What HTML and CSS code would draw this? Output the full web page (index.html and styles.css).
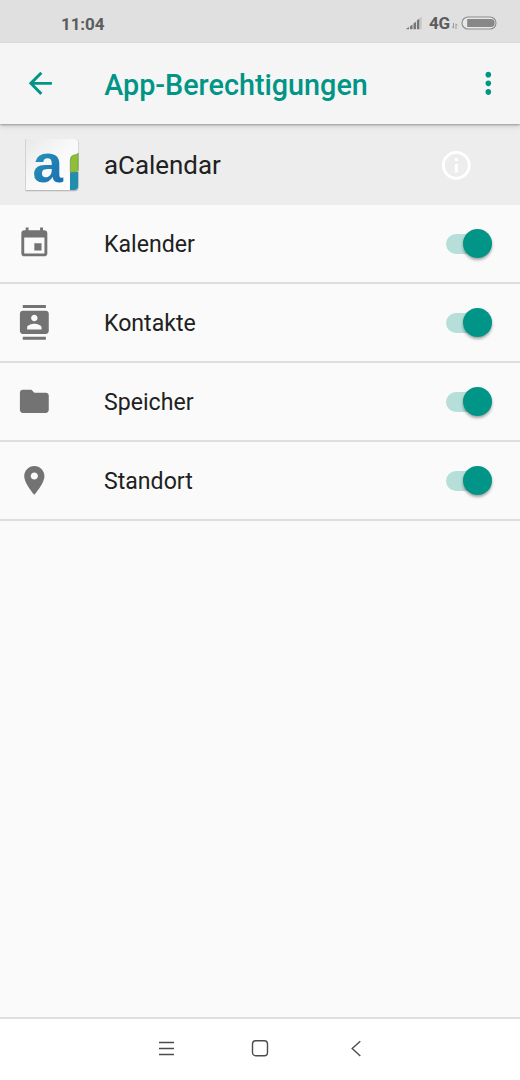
FILE: index.html
```html
<!DOCTYPE html>
<html lang="de">
<head>
<meta charset="utf-8">
<title>App-Berechtigungen</title>
<link rel="stylesheet" href="styles.css">
</head>
<body>
<div class="screen">
  <div class="status">
    <span class="time">11:04</span>
    <div class="indicators">
      <svg class="signal" width="16" height="14" viewBox="0 0 16 14">
        <path d="M.5 13.200h2.500v-2.200L.5 12.600zM4 13.200h2.500V8.500L4 10.200zM7.500 13.200h2.500V5.800L7.500 7.500zM10.900 13.200h2.500V2.500L10.900 4.500z" fill="#777"/>
        <path d="M14.200 13.200h1.500V0.500L14.200 1.700z" fill="#c4c4c4"/>
      </svg>
      <span class="network">4G</span>
      <svg class="data" width="6" height="6" viewBox="0 0 6 6"><path d="M1.500 0v5M0.300 3.600l1.200 1.700M4 6V1M4 .8l1.300 1.500" fill="none" stroke="#999" stroke-width="1"/></svg>
      <svg class="battery" width="36" height="14" viewBox="0 0 36 14">
        <rect x="1" y="1" width="34" height="12" rx="6" fill="#e8e8e8" stroke="#8c8c8c" stroke-width="1.100"/>
        <path d="M6.200 3h23.500a4 4 0 0 1 0 8H6.200z" fill="#878787"/>
      </svg>
    </div>
  </div>
  <header class="toolbar">
    <svg class="back" width="34.670" height="34.670" viewBox="0 0 24 24"><path d="M20 11H7.830l5.590-5.590L12 4l-8 8 8 8 1.410-1.410L7.830 13H20v-2z"/></svg>
    <h1 class="title">App-Berechtigungen</h1>
    <svg class="more" width="34.670" height="34.670" viewBox="0 0 24 24"><path d="M12 8c1.100 0 2-.9 2-2s-.9-2-2-2-2 .9-2 2 .9 2 2 2zm0 2c-1.100 0-2 .9-2 2s.9 2 2 2 2-.9 2-2-.9-2-2-2zm0 6c-1.100 0-2 .9-2 2s.9 2 2 2 2-.9 2-2-.9-2-2-2z"/></svg>
  </header>
  <div class="app">
    <svg class="logo" width="58" height="60" viewBox="0 0 58 60">
      <defs>
        <linearGradient id="tile" x1="0" y1="0" x2="1" y2="1"><stop offset="0" stop-color="#e9e9e9"/><stop offset=".45" stop-color="#f8f8f8"/><stop offset="1" stop-color="#fff"/></linearGradient>
        <linearGradient id="ink" x1="0" y1="0" x2=".7" y2="1"><stop offset="0" stop-color="#2b9fba"/><stop offset="1" stop-color="#1b6fb0"/></linearGradient>
      </defs>
      <path d="M2.500 3.300h49.200q3.900 0 3.900 4v43.500q0 4.500-4 4.500H2.500z" fill="#b9b9b9"/>
      <path d="M3 3h48.500q3.700 0 3.700 4v43q0 4-4 4H3z" fill="url(#tile)"/>
      <text class="letter" x="9.500" y="46" textLength="30.500" lengthAdjust="spacingAndGlyphs" fill="url(#ink)">a</text>
      <path d="M47 36h8.200v14q0 4-4 4H47z" fill="#238dad"/>
      <path d="M47.300 36.500V24q0-4.500 4-5 2.500 0 3.900-1.800v17.300q-1 1.500-3.500 1.500-2.400 0-4.400.5z" fill="#8fbf36" stroke="#6c8f55" stroke-width=".7"/>
    </svg>
    <span class="name">aCalendar</span>
    <svg class="info" width="34.670" height="34.670" viewBox="0 0 24 24"><path d="M11 17h2v-6h-2v6zm1-15C6.480 2 2 6.480 2 12s4.480 10 10 10 10-4.480 10-10S17.520 2 12 2zm0 18c-4.410 0-8-3.590-8-8s3.590-8 8-8 8 3.590 8 8-3.590 8-8 8zM11 9h2V7h-2v2z"/></svg>
  </div>
  <main class="list">
    <div class="row">
      <svg class="icon" viewBox="0 0 24 24"><path d="M17 12h-5v5h5v-5zM16 1v2H8V1H6v2H5c-1.110 0-1.990.9-1.990 2L3 19c0 1.100.89 2 2 2h14c1.100 0 2-.9 2-2V5c0-1.100-.9-2-2-2h-1V1h-2zm3 18H5V8h14v11z"/></svg>
      <span class="label">Kalender</span><span class="switch"><span class="thumb"></span></span>
    </div>
    <div class="row">
      <svg class="icon" viewBox="0 0 24 24"><path d="M20 0H4v2h16V0zM4 24h16v-2H4v2zM20 4H4c-1.100 0-2 .9-2 2v12c0 1.100.9 2 2 2h16c1.100 0 2-.9 2-2V6c0-1.100-.9-2-2-2zm-8 2.750c1.240 0 2.250 1.010 2.250 2.250s-1.010 2.250-2.250 2.250S9.750 10.240 9.750 9 10.760 6.750 12 6.750zM17 17H7v-1.500c0-1.670 3.330-2.500 5-2.500s5 .83 5 2.500V17z"/></svg>
      <span class="label">Kontakte</span><span class="switch"><span class="thumb"></span></span>
    </div>
    <div class="row">
      <svg class="icon" viewBox="0 0 24 24"><path d="M10 4H4c-1.100 0-1.990.9-1.990 2L2 18c0 1.100.9 2 2 2h16c1.100 0 2-.9 2-2V8c0-1.100-.9-2-2-2h-8l-2-2z"/></svg>
      <span class="label">Speicher</span><span class="switch"><span class="thumb"></span></span>
    </div>
    <div class="row">
      <svg class="icon" viewBox="0 0 24 24"><path d="M12 2C8.130 2 5 5.130 5 9c0 5.250 7 13 7 13s7-7.750 7-13c0-3.870-3.130-7-7-7zm0 9.500c-1.380 0-2.500-1.120-2.500-2.500s1.120-2.500 2.500-2.500 2.500 1.120 2.500 2.500-1.120 2.500-2.500 2.500z"/></svg>
      <span class="label">Standort</span><span class="switch"><span class="thumb"></span></span>
    </div>
  </main>
  <nav class="nav">
    <svg width="18" height="18" viewBox="0 0 18 18"><path d="M2 3.500h15M2 9.500h15M2 15.500h15"/></svg>
    <svg width="18" height="18" viewBox="0 0 18 18"><rect x="1.500" y="1.800" width="15" height="15" rx="3.200"/></svg>
    <svg width="18" height="18" viewBox="0 0 18 18"><path d="M15.300 2.200L7.200 9.500l8.100 7.500"/></svg>
  </nav>
</div>
</body>
</html>
```
FILE: styles.css
```css
* { box-sizing: border-box; }
body { margin: 0; background: #fafafa; font-family: Roboto, sans-serif; color: #212121; }
svg { display: block; flex: none; }
.screen { width: 520px; height: 1080px; display: flex; flex-direction: column; overflow: hidden; }

.status { height: 43px; flex: none; background: #e0e0e0; display: flex; align-items: center; justify-content: space-between; padding: 4px 23.500px 0 61px; color: #5c5c5c; font-weight: 700; font-size: 17px; line-height: 20px; }
.time { letter-spacing: -.1px; }
.indicators { display: flex; align-items: center; margin-top: -1px; }
.signal { margin-right: 7px; }
.network { width: 22.500px; letter-spacing: -.2px; }
.data { margin: 6px 3px 0 0; }

.toolbar { height: 81px; flex: none; background: #f5f5f5; display: flex; align-items: center; padding: 0 14.500px 0 23px; position: relative; z-index: 1; box-shadow: 0 1px 2px rgba(0,0,0,.3), 0 3px 5px rgba(0,0,0,.1); }
.toolbar svg { fill: #009587; }
.title { margin: 2px 0 0 46.500px; flex: 1; color: #009587; font-size: 28.750px; line-height: 34px; font-weight: 500; white-space: nowrap; }

.app { height: 81px; flex: none; background: #ededed; display: flex; align-items: center; padding: 1px 46.500px 0 23px; }
.logo { overflow: visible; margin-top: 2px; }
.letter { font-family: "Liberation Sans", Arial, sans-serif; font-weight: 700; font-size: 54px; }
.name { flex: 1; margin-left: 23px; font-size: 25.900px; line-height: 32px; }
.info { fill: #fff; }

.list { flex: 1; }
.row { height: 78.900px; border-bottom: 2px solid #dedede; display: flex; align-items: center; padding: 0 28px 0 17.330px; }
.icon { width: 34.670px; height: 34.670px; fill: #737373; }
.label { flex: 1; margin: 4px 0 0 52px; font-size: 23.110px; line-height: 28px; }
.switch { width: 46px; height: 20px; margin-top: 1px; border-radius: 10px; background: #b6dfda; display: flex; align-items: center; justify-content: flex-end; }
.thumb { width: 29px; height: 29px; border-radius: 50%; background: #009587; flex: none; box-shadow: 0 2px 3px rgba(0,0,0,.35); }

.nav { height: 63px; flex: none; background: #fff; border-top: 2px solid #dedede; display: flex; justify-content: center; gap: 76px; padding-top: 20px; }
.nav svg { fill: none; stroke: #4c4c4c; stroke-width: 1.400; }
```
